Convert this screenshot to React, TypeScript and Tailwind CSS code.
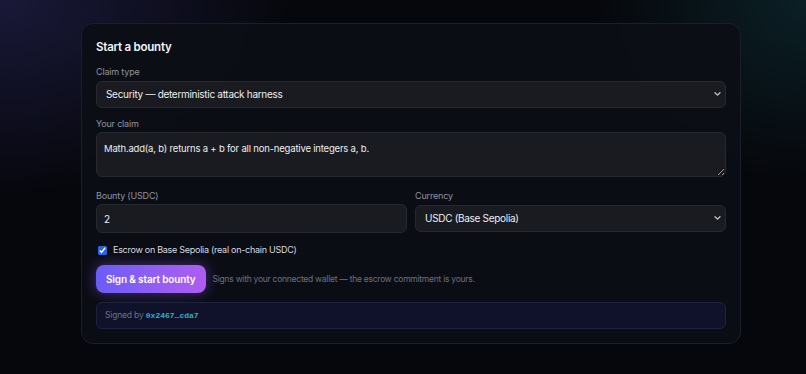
import { useState } from "react";

function Chevron() {
  return (
    <svg
      className="pointer-events-none absolute top-1/2 right-[5px] -translate-y-1/2"
      width="7"
      height="5"
      viewBox="0 0 7 5"
      fill="none"
    >
      <path d="M1 1.2L3.5 3.6L6 1.2" stroke="#c9ccd3" strokeWidth="1.2" strokeLinecap="round" strokeLinejoin="round" />
    </svg>
  );
}

export default function App() {
  const [escrow, setEscrow] = useState(true);

  return (
    <div
      className="min-h-screen w-full bg-[#06070c] font-['Inter','Noto_Sans',sans-serif] text-[#e5e7eb]"
      style={{
        backgroundImage:
          "radial-gradient(ellipse 420px 280px at 0% 0%, rgba(49,46,110,0.45), transparent 70%), radial-gradient(ellipse 300px 260px at 100% 0%, rgba(20,78,84,0.35), transparent 70%)",
      }}
    >
      <div className="flex justify-center pt-[23px] pl-4">
        <div className="flex w-[660px] flex-col rounded-xl border border-[#1c1f29] bg-[#0c0e15]/90 px-[14px] pt-[13px] pb-[14px]">
          <h2 className="text-[11.5px] leading-5 font-semibold tracking-[-0.02em] text-[#f3f4f6]">Start a bounty</h2>

          {/* claim type */}
          <label className="mt-[7px] text-[9px] leading-4 tracking-[-0.02em] text-[#8f939e]">Claim type</label>
          <div className="relative">
            <select className="h-[27px] w-full appearance-none rounded-md border border-[#272931] bg-[#1a1b20] pl-[9px] pr-5 text-[10px] tracking-[-0.03em] text-[#eceef2] outline-none">
              <option>Security — deterministic attack harness</option>
              <option>Correctness — property tests</option>
            </select>
            <Chevron />
          </div>

          {/* claim text */}
          <label className="mt-[8px] text-[9px] leading-4 tracking-[-0.02em] text-[#8f939e]">Your claim</label>
          <textarea
            className="h-[45px] w-full rounded-md border border-[#272931] bg-[#1a1b20] px-[7px] py-[8px] text-[9.5px] leading-4 tracking-[-0.02em] text-[#eceef2] outline-none [color-scheme:dark]"
            defaultValue="Math.add(a, b) returns a + b for all non-negative integers a, b."
          />

          {/* bounty + currency */}
          <div className="mt-[11px] grid grid-cols-2 gap-2">
            <div className="flex flex-col">
              <label className="text-[9px] leading-4 tracking-[-0.02em] text-[#8f939e]">Bounty (USDC)</label>
              <input
                className="h-[29px] w-full rounded-md border border-[#272931] bg-[#1a1b20] px-[7px] text-[10px] tracking-[-0.02em] text-[#eceef2] outline-none"
                defaultValue="2"
              />
            </div>
            <div className="flex flex-col">
              <label className="text-[9px] leading-4 tracking-[-0.02em] text-[#8f939e]">Currency</label>
              <div className="relative">
                <select className="h-[27px] w-full appearance-none rounded-md border border-[#272931] bg-[#1a1b20] pl-[9px] pr-5 text-[10px] tracking-[-0.03em] text-[#eceef2] outline-none">
                  <option>USDC (Base Sepolia)</option>
                </select>
                <Chevron />
              </div>
            </div>
          </div>

          {/* escrow checkbox */}
          <label className="mt-[9px] flex items-center gap-[6px] text-[9px] leading-4 tracking-[-0.03em] text-[#d8dbe0]">
            <input
              type="checkbox"
              checked={escrow}
              onChange={(e) => setEscrow(e.target.checked)}
              className="m-0 ml-[2px] h-[9px] w-[9px] accent-[#2563eb]"
            />
            Escrow on Base Sepolia (real on-chain USDC)
          </label>

          {/* action */}
          <div className="mt-[7px] flex items-center gap-[7px]">
            <button className="h-[28px] rounded-lg bg-gradient-to-r from-[#6a5cf6] to-[#b05cf0] px-[10px] text-[10px] font-semibold tracking-[-0.015em] text-white shadow-[0_0_14px_rgba(139,92,246,0.45)]">
              Sign &amp; start bounty
            </button>
            <span className="text-[8.5px] tracking-[-0.03em] text-[#6b7180]">
              Signs with your connected wallet — the escrow commitment is yours.
            </span>
          </div>

          {/* signed */}
          <div className="mt-[9px] flex h-[27px] items-center rounded-md border border-[#1f2140] bg-[#10112a] px-2 text-[8.5px] tracking-[-0.02em] text-[#6b7180]">
            Signed by&nbsp;
            <span className="font-['Liberation_Mono',monospace] text-[8px] font-semibold tracking-normal text-[#2bb3c9]">0x2467…cda7</span>
          </div>
        </div>
      </div>
    </div>
  );
}
